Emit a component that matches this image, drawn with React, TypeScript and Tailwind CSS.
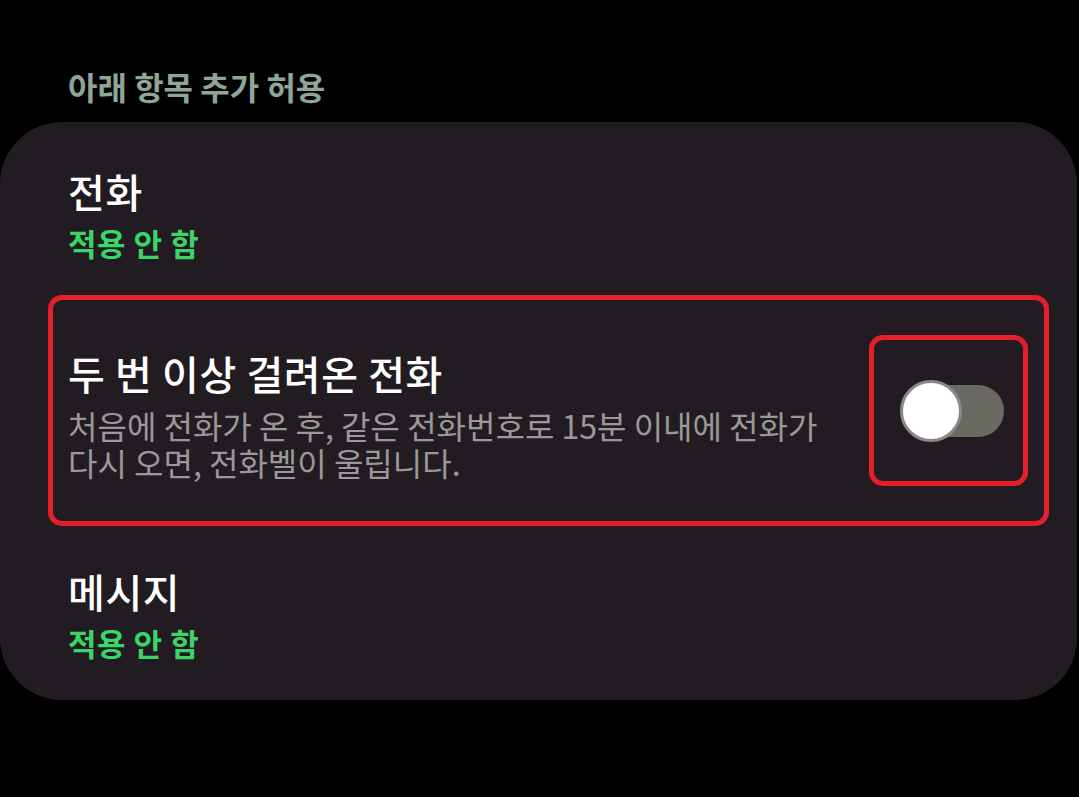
export default function App() {
  const font = { fontFamily: '"Noto Sans CJK KR", "Noto Sans", sans-serif' };
  return (
    <div
      className="w-[1079px] h-[797px] bg-black overflow-hidden"
      style={font}
    >
      <div className="pl-[68px] pt-[63px] h-[122px]">
        <h2 className="text-[32px] leading-[46px] font-bold text-[#8fa597]">아래 항목 추가 허용</h2>
      </div>

      <div className="w-[1077px] h-[578px] bg-[#221c22] rounded-[62px] pt-[40px]">
        {/* 전화 */}
        <div className="pl-[68px] h-[133px]">
          <div className="text-[40px] leading-[58px] font-medium tracking-[0.6px] text-white">전화</div>
          <div className="text-[31px] leading-[45px] font-bold tracking-[0.5px] text-[#3ad467]">적용 안 함</div>
        </div>

        {/* 두 번 이상 걸려온 전화 */}
        <div className="ml-[48px] mr-[28px] h-[231px] border-[5px] border-[#e41e2a] rounded-[14px] flex items-center pl-[15px] pr-[16px]">
          <div className="flex-1 self-start pt-[44px]">
            <div className="text-[40px] leading-[58px] font-medium tracking-[0.6px] text-white">두 번 이상 걸려온 전화</div>
            <div className="mt-[5px] text-[32px] leading-[37px] text-[#9b979b] w-[770px]">
              처음에 전화가 온 후, 같은 전화번호로 15분 이내에 전화가 다시 오면, 전화벨이 울립니다.
            </div>
          </div>
          <div className="w-[159px] h-[151px] border-[5px] border-[#e41e2a] rounded-[14px] flex items-center justify-center">
            <div className="relative w-[102px] h-[52px] rounded-full bg-[#6a6a63] ml-[8px]">
              <div className="absolute left-[-2px] top-[-5px] w-[62px] h-[62px] rounded-full bg-white border-[3px] border-[#8a888a]" />
            </div>
          </div>
        </div>

        {/* 메시지 */}
        <div className="pl-[68px] pt-[36px]">
          <div className="text-[40px] leading-[58px] font-medium tracking-[0.6px] text-white">메시지</div>
          <div className="text-[31px] leading-[45px] font-bold tracking-[0.5px] text-[#3ad467]">적용 안 함</div>
        </div>
      </div>
    </div>
  );
}
